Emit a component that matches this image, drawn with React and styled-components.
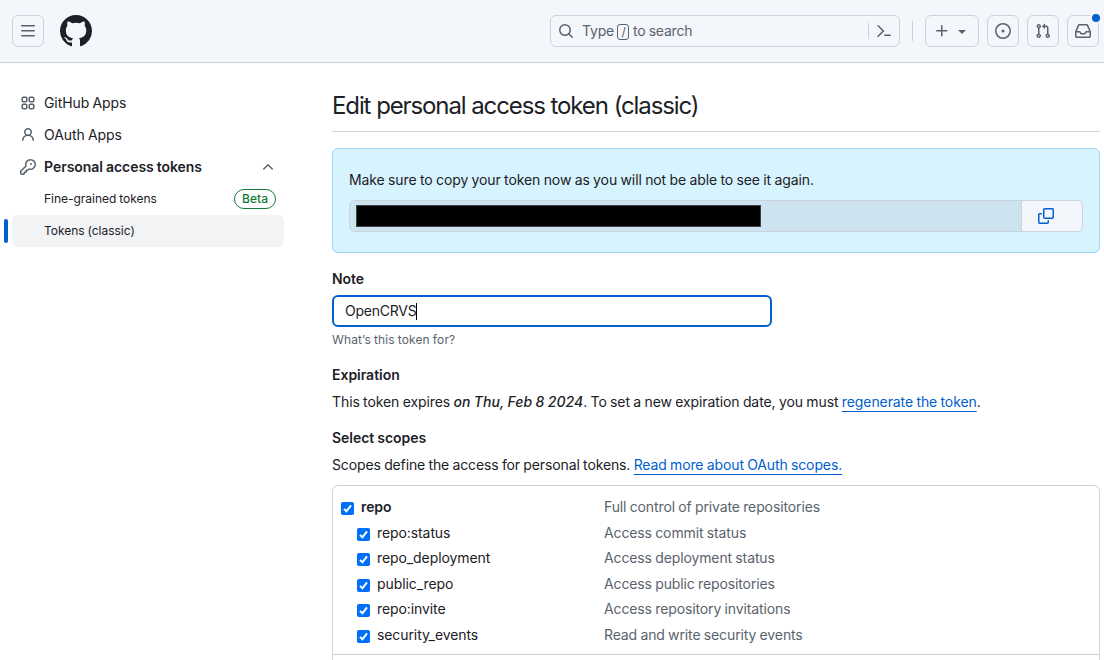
import React from "react";
import styled, { createGlobalStyle, css } from "styled-components";

const color = {
  text: "#1c2127",
  muted: "#5a636d",
  border: "#cbd3da",
  subtle: "#f3f6fa",
  blue: "#0060d0",
  green: "#127a37",
};

const GlobalStyle = createGlobalStyle`
  * { box-sizing: border-box; }
  html, body { margin: 0; padding: 0; height: 660px; overflow: hidden; background: #fff; }
  body {
    font-family: Inter, "Liberation Sans", sans-serif;
    font-size: 14px;
    line-height: 20px;
    letter-spacing: -0.09px;
    word-spacing: -0.47px;
    color: ${color.text};
  }
  h2, h3, p, ul { margin: 0; padding: 0; font-size: inherit; }
  ul { list-style: none; }
  button { font: inherit; color: inherit; padding: 0; }
`;

const paths = {
  bars: "M1 2.75A.75.75 0 0 1 1.75 2h12.5a.75.75 0 0 1 0 1.5H1.75A.75.75 0 0 1 1 2.75Zm0 5A.75.75 0 0 1 1.75 7h12.5a.75.75 0 0 1 0 1.5H1.75A.75.75 0 0 1 1 7.75ZM1.75 12h12.5a.75.75 0 0 1 0 1.5H1.75a.75.75 0 0 1 0-1.5Z",
  mark: "M8 0c4.42 0 8 3.58 8 8a8.013 8.013 0 0 1-5.45 7.59c-.4.08-.55-.17-.55-.38 0-.27.01-1.13.01-2.2 0-.75-.25-1.23-.54-1.48 1.78-.2 3.65-.88 3.65-3.95 0-.88-.31-1.59-.82-2.15.08-.2.36-1.02-.08-2.12 0 0-.67-.22-2.2.82-.64-.18-1.32-.27-2-.27-.68 0-1.36.09-2 .27-1.53-1.03-2.2-.82-2.2-.82-.44 1.1-.16 1.92-.08 2.12-.51.56-.82 1.28-.82 2.15 0 3.06 1.86 3.75 3.64 3.95-.23.2-.44.55-.51 1.07-.46.21-1.61.55-2.33-.66-.15-.24-.6-.83-1.23-.82-.67.01-.27.38.01.53.34.19.73.9.82 1.13.16.45.68 1.31 2.69.94 0 .67.01 1.3.01 1.49 0 .21-.15.45-.55.38A7.995 7.995 0 0 1 0 8c0-4.42 3.58-8 8-8Z",
  search: "M10.68 11.74a6 6 0 0 1-7.922-8.982 6 6 0 0 1 8.982 7.922l3.04 3.04a.749.749 0 0 1-.326 1.275.749.749 0 0 1-.734-.215ZM11.5 7a4.499 4.499 0 1 0-8.997 0A4.499 4.499 0 0 0 11.5 7Z",
  palette: "m6.354 8.04-4.773 4.773a.75.75 0 1 0 1.061 1.06L7.945 8.57a.75.75 0 0 0 0-1.06L2.642 2.206a.75.75 0 0 0-1.06 1.061L6.353 8.04ZM8.75 11.5a.75.75 0 0 0 0 1.5h5.5a.75.75 0 0 0 0-1.5h-5.5Z",
  plus: "M7.75 2a.75.75 0 0 1 .75.75V7h4.25a.75.75 0 0 1 0 1.5H8.5v4.25a.75.75 0 0 1-1.5 0V8.5H2.75a.75.75 0 0 1 0-1.5H7V2.75A.75.75 0 0 1 7.75 2Z",
  triangle: "m4.427 7.427 3.396 3.396a.25.25 0 0 0 .354 0l3.396-3.396A.25.25 0 0 0 11.396 7H4.604a.25.25 0 0 0-.177.427Z",
  issue: "M8 9.5a1.5 1.5 0 1 0 0-3 1.5 1.5 0 0 0 0 3ZM8 0a8 8 0 1 1 0 16A8 8 0 0 1 8 0ZM1.5 8a6.5 6.5 0 1 0 13 0 6.5 6.5 0 0 0-13 0Z",
  pull: "M1.5 3.25a2.25 2.25 0 1 1 3 2.122v5.256a2.251 2.251 0 1 1-1.5 0V5.372A2.25 2.25 0 0 1 1.5 3.25Zm5.677-.177L9.573.677A.25.25 0 0 1 10 .854V2.5h1A2.5 2.5 0 0 1 13.5 5v5.628a2.251 2.251 0 1 1-1.5 0V5a1 1 0 0 0-1-1h-1v1.646a.25.25 0 0 1-.427.177L7.177 3.427a.25.25 0 0 1 0-.354ZM3.75 2.5a.75.75 0 1 0 0 1.5.75.75 0 0 0 0-1.5Zm0 9.5a.75.75 0 1 0 0 1.5.75.75 0 0 0 0-1.5Zm8.25.75a.75.75 0 1 0 1.5 0 .75.75 0 0 0-1.5 0Z",
  inbox: "M2.8 2.06A1.75 1.75 0 0 1 4.41 1h7.18c.7 0 1.333.417 1.61 1.06l2.74 6.395c.04.093.06.194.06.295v4.5A1.75 1.75 0 0 1 14.25 15H1.75A1.75 1.75 0 0 1 0 13.25v-4.5c0-.101.02-.202.06-.295Zm1.61.44a.25.25 0 0 0-.23.152L1.887 8H4.75a.75.75 0 0 1 .6.3L6.625 10h2.75l1.275-1.7a.75.75 0 0 1 .6-.3h2.863L11.82 2.652a.25.25 0 0 0-.23-.152Zm10.09 7h-2.875l-1.275 1.7a.75.75 0 0 1-.6.3h-3.5a.75.75 0 0 1-.6-.3L4.375 9.5H1.5v3.75c0 .138.112.25.25.25h12.5a.25.25 0 0 0 .25-.25Z",
  apps: "M1.5 3.25c0-.966.784-1.75 1.75-1.75h2.5c.966 0 1.75.784 1.75 1.75v2.5A1.75 1.75 0 0 1 5.75 7.5h-2.5A1.75 1.75 0 0 1 1.5 5.75Zm7 0c0-.966.784-1.75 1.75-1.75h2.5c.966 0 1.75.784 1.75 1.75v2.5a1.75 1.75 0 0 1-1.75 1.75h-2.5A1.75 1.75 0 0 1 8.5 5.75Zm-7 7c0-.966.784-1.75 1.75-1.75h2.5c.966 0 1.75.784 1.75 1.75v2.5a1.75 1.75 0 0 1-1.75 1.75h-2.5a1.75 1.75 0 0 1-1.75-1.75Zm7 0c0-.966.784-1.75 1.75-1.75h2.5c.966 0 1.75.784 1.75 1.75v2.5a1.75 1.75 0 0 1-1.75 1.75h-2.5a1.75 1.75 0 0 1-1.75-1.75ZM3.25 3a.25.25 0 0 0-.25.25v2.5c0 .138.112.25.25.25h2.5A.25.25 0 0 0 6 5.75v-2.5A.25.25 0 0 0 5.75 3Zm7 0a.25.25 0 0 0-.25.25v2.5c0 .138.112.25.25.25h2.5a.25.25 0 0 0 .25-.25v-2.5a.25.25 0 0 0-.25-.25Zm-7 7a.25.25 0 0 0-.25.25v2.5c0 .138.112.25.25.25h2.5a.25.25 0 0 0 .25-.25v-2.5a.25.25 0 0 0-.25-.25Zm7 0a.25.25 0 0 0-.25.25v2.5c0 .138.112.25.25.25h2.5a.25.25 0 0 0 .25-.25v-2.5a.25.25 0 0 0-.25-.25Z",
  person: "M10.561 8.073a6.005 6.005 0 0 1 3.432 5.142.75.75 0 1 1-1.498.07 4.5 4.5 0 0 0-8.99 0 .75.75 0 0 1-1.498-.07 6.004 6.004 0 0 1 3.431-5.142 3.999 3.999 0 1 1 5.123 0ZM10.5 5a2.5 2.5 0 1 0-5 0 2.5 2.5 0 0 0 5 0Z",
  key: "M10.5 0a5.499 5.499 0 1 1-1.288 10.848l-.932.932a.749.749 0 0 1-.53.22H7v.75a.749.749 0 0 1-.22.53l-.5.5a.749.749 0 0 1-.53.22H5v.75a.749.749 0 0 1-.22.53l-.5.5a.749.749 0 0 1-.53.22h-2A1.75 1.75 0 0 1 0 14.25v-2c0-.199.079-.389.22-.53l4.932-4.932A5.5 5.5 0 0 1 10.5 0Zm-4 5.5c-.001.431.069.86.205 1.269a.75.75 0 0 1-.181.768L1.5 12.56v1.69c0 .138.112.25.25.25h1.69l.06-.06v-1.19a.75.75 0 0 1 .75-.75h1.19l.06-.06v-1.19a.75.75 0 0 1 .75-.75h1.19l1.023-1.025a.75.75 0 0 1 .768-.18A4 4 0 1 0 6.5 5.5ZM11 6a1 1 0 1 1 0-2 1 1 0 0 1 0 2Z",
  chevron: "M3.22 10.53a.749.749 0 0 1 0-1.06l4.25-4.25a.749.749 0 0 1 1.06 0l4.25 4.25a.749.749 0 1 1-1.06 1.06L8 6.811 4.28 10.53a.749.749 0 0 1-1.06 0Z",
  copy: "M0 6.75C0 5.784.784 5 1.75 5h1.5a.75.75 0 0 1 0 1.5h-1.5a.25.25 0 0 0-.25.25v7.5c0 .138.112.25.25.25h7.5a.25.25 0 0 0 .25-.25v-1.5a.75.75 0 0 1 1.5 0v1.5A1.75 1.75 0 0 1 9.25 16h-7.5A1.75 1.75 0 0 1 0 14.25ZM5 1.75C5 .784 5.784 0 6.75 0h7.5C15.216 0 16 .784 16 1.75v7.5A1.75 1.75 0 0 1 14.25 11h-7.5A1.75 1.75 0 0 1 5 9.25Zm1.75-.25a.25.25 0 0 0-.25.25v7.5c0 .138.112.25.25.25h7.5a.25.25 0 0 0 .25-.25v-7.5a.25.25 0 0 0-.25-.25Z",
};

const Svg = styled.svg`
  display: block;
  flex: none;
  fill: currentColor;
`;

const Icon = ({ name, size = 16 }) => (
  <Svg width={size} height={size} viewBox="0 0 16 16" aria-hidden="true">
    <path fillRule="evenodd" d={paths[name]} />
  </Svg>
);

const Header = styled.header`
  display: flex;
  align-items: center;
  justify-content: space-between;
  height: 63px;
  padding: 0 5px 0 12px;
  background: ${color.subtle};
  border-bottom: 1px solid ${color.border};
`;

const HeaderGroup = styled.div`
  display: flex;
  align-items: center;
  gap: ${(p) => p.$gap}px;
`;

const HeaderButton = styled.button`
  position: relative;
  display: flex;
  align-items: center;
  justify-content: center;
  gap: 4px;
  width: ${(p) => (p.$wide ? 54 : 32)}px;
  height: 32px;
  border: 1px solid ${color.border};
  border-radius: 6px;
  background: transparent;
  color: ${color.muted};
`;

const Logo = styled.a`
  color: ${color.text};
`;

const SearchBox = styled.div`
  display: flex;
  align-items: center;
  width: 350px;
  height: 32px;
  padding: 0 7px;
  border: 1px solid ${color.border};
  border-radius: 6px;
  color: ${color.muted};
`;

const SearchHint = styled.span`
  display: flex;
  align-items: center;
  flex: 1;
  gap: 3.5px;
  margin-left: 8px;
  letter-spacing: -0.2px;
`;

const SlashKey = styled.kbd`
  display: flex;
  align-items: center;
  justify-content: center;
  width: 12px;
  height: 16px;
  margin-top: 2px;
  border: 1px solid ${color.muted};
  border-radius: 3px;
  font: 12px/14px Inter, sans-serif;
`;

const Divider = styled.span`
  width: 1px;
  height: ${(p) => p.$height}px;
  margin-right: ${(p) => p.$after}px;
  background: ${color.border};
`;

const UnreadDot = styled.span`
  position: absolute;
  top: -4px;
  right: -4px;
  width: 12px;
  height: 12px;
  border: 2px solid ${color.subtle};
  border-radius: 50%;
  background: ${color.blue};
`;

const Layout = styled.div`
  display: flex;
  gap: 48px;
  height: 597px;
  overflow: hidden;
`;

const Sidebar = styled.nav`
  display: flex;
  flex-direction: column;
  flex: none;
  width: 284px;
  padding-top: 24px;
  padding-left: 4px;
`;

const NavRow = styled.a`
  display: flex;
  align-items: center;
  gap: 8px;
  height: 32px;
  margin-left: 8px;
  padding: 0 8px;
  ${(p) => p.$bold && css`
    font-weight: 600;
    letter-spacing: -0.04px;
  `}
`;

const SubRow = styled.a`
  display: flex;
  align-items: center;
  justify-content: space-between;
  flex: 1;
  height: 32px;
  padding: 0 8px 0 32px;
  border-radius: 6px;
  font-size: 12px;
  letter-spacing: -0.02px;
  background: ${(p) => (p.$current ? "#f2f3f5" : "transparent")};
`;

const SubItem = styled.div`
  display: flex;
  align-items: center;
  gap: 4px;
`;

const CurrentBar = styled.span`
  width: 4px;
  height: 24px;
  border-radius: 2px;
  background: ${(p) => (p.$current ? color.blue : "transparent")};
`;

const NavIcon = styled.span`
  color: ${color.muted};
`;

const NavLabel = styled.span`
  flex: 1;
`;

const BetaLabel = styled.span`
  padding: 0 7px;
  border: 1px solid ${color.green};
  border-radius: 10px;
  color: ${color.green};
  font-weight: 500;
  letter-spacing: 0;
  line-height: 18px;
`;

const Main = styled.main`
  width: 768px;
  flex: none;
  padding-top: 24px;
`;

const Title = styled.h2`
  height: 45px;
  border-bottom: 1px solid ${color.border};
  font-size: 24px;
  font-weight: 400;
  letter-spacing: -1.12px;
  word-spacing: 0.2px;
  line-height: 38px;
`;

const Flash = styled.section`
  height: 105px;
  margin-top: 16px;
  padding: 21px 16px 0;
  border: 1px solid #9fd4f9;
  border-radius: 6px;
  background: #d7f3fe;
`;

const TokenField = styled.div`
  display: flex;
  height: 32px;
  margin-top: 10px;
  border: 1px solid ${color.border};
  border-radius: 6px;
  background: #cde3ef;
  overflow: hidden;
`;

const TokenValue = styled.div`
  flex: 1;
  padding: 4px 6px;
`;

const Redaction = styled.div`
  width: 405px;
  height: 22px;
  border: 1px solid #3c4347;
  background: #000;
`;

const CopyButton = styled.button`
  width: 61px;
  padding-left: 16px;
  border: 0;
  border-left: 1px solid ${color.border};
  background: ${color.subtle};
  color: ${color.blue};
`;

const SectionLabel = styled.h3`
  margin-top: ${(p) => p.$top}px;
  font-weight: 600;
  letter-spacing: -0.03px;
`;

const NoteInput = styled.div`
  display: flex;
  align-items: center;
  width: 440px;
  height: 32px;
  margin-top: 6px;
  padding: 0 11px;
  border: 2px solid ${color.blue};
  border-radius: 6px;
  letter-spacing: -0.24px;
`;

const Caret = styled.span`
  width: 1px;
  height: 17px;
  background: #000;
`;

const Hint = styled.p`
  margin-top: 4px;
  color: ${color.muted};
  font-size: 12px;
  letter-spacing: 0.13px;
  line-height: 18px;
`;

const Paragraph = styled.p`
  margin-top: 7px;
  white-space: nowrap;
  letter-spacing: ${(p) => (p.$tight ? -0.12 : -0.09)}px;
`;

const ExpiryDate = styled.em`
  font-weight: 500;
  letter-spacing: 0.06px;
`;

const Link = styled.a`
  color: ${color.blue};
  text-decoration: underline;
  text-underline-offset: 4px;
  text-decoration-thickness: 1px;
  text-decoration-skip-ink: none;
`;

const ScopeBox = styled.div`
  height: 240px;
  margin-top: 10px;
  border: 1px solid ${color.border};
  border-radius: 6px;
`;

const ScopeGroup = styled.ul`
  height: 169px;
  padding-top: 8.35px;
  border-bottom: 1px solid ${color.border};
`;

const ScopeRow = styled.li`
  display: grid;
  grid-template-columns: 271px 1fr;
  align-items: center;
  height: 25.5px;
`;

const ScopeName = styled.label`
  display: flex;
  align-items: center;
  gap: 7px;
  padding-left: ${(p) => (p.$root ? 8 : 24)}px;
  font-weight: ${(p) => (p.$root ? 600 : 400)};
`;

const ScopeText = styled.span`
  color: ${color.muted};
  letter-spacing: -0.12px;
`;

const Box = styled.svg`
  display: block;
  margin-top: 3px;
`;

const Checkbox = () => (
  <Box width="13" height="13" viewBox="0 0 13 13">
    <rect width="13" height="13" rx="1.8" fill="#0070fb" />
    <path d="M3 6.9 5.4 9.3 10 3.3" fill="none" stroke="#fff" strokeWidth="2" />
  </Box>
);

const scopes = [
  ["repo", "Full control of private repositories"],
  ["repo:status", "Access commit status"],
  ["repo_deployment", "Access deployment status"],
  ["public_repo", "Access public repositories"],
  ["repo:invite", "Access repository invitations"],
  ["security_events", "Read and write security events"],
];

export default function App() {
  return (
    <>
      <GlobalStyle />
      <Header>
        <HeaderGroup $gap={16}>
          <HeaderButton><Icon name="bars" /></HeaderButton>
          <Logo><Icon name="mark" size={32} /></Logo>
        </HeaderGroup>
        <HeaderGroup $gap={12}>
          <SearchBox>
            <Icon name="search" />
            <SearchHint>
              <span>Type</span>
              <SlashKey>/</SlashKey>
              <span>to search</span>
            </SearchHint>
            <Divider $height={16} $after={7} />
            <Icon name="palette" />
          </SearchBox>
          <HeaderGroup $gap={8}>
            <Divider $height={20} $after={4} />
            <HeaderButton $wide><Icon name="plus" /><Icon name="triangle" /></HeaderButton>
            <HeaderButton><Icon name="issue" /></HeaderButton>
            <HeaderButton><Icon name="pull" /></HeaderButton>
            <HeaderButton><Icon name="inbox" /><UnreadDot /></HeaderButton>
          </HeaderGroup>
        </HeaderGroup>
      </Header>
      <Layout>
        <Sidebar>
          <NavRow><NavIcon><Icon name="apps" /></NavIcon><NavLabel>GitHub Apps</NavLabel></NavRow>
          <NavRow><NavIcon><Icon name="person" /></NavIcon><NavLabel>OAuth Apps</NavLabel></NavRow>
          <NavRow $bold>
            <NavIcon><Icon name="key" /></NavIcon>
            <NavLabel>Personal access tokens</NavLabel>
            <NavIcon><Icon name="chevron" /></NavIcon>
          </NavRow>
          <SubItem>
            <CurrentBar />
            <SubRow>Fine-grained tokens<BetaLabel>Beta</BetaLabel></SubRow>
          </SubItem>
          <SubItem>
            <CurrentBar $current />
            <SubRow $current>Tokens (classic)</SubRow>
          </SubItem>
        </Sidebar>
        <Main>
          <Title>Edit personal access token (classic)</Title>
          <Flash>
            <p>Make sure to copy your token now as you will not be able to see it again.</p>
            <TokenField>
              <TokenValue><Redaction /></TokenValue>
              <CopyButton><Icon name="copy" /></CopyButton>
            </TokenField>
          </Flash>
          <SectionLabel $top={16}>Note</SectionLabel>
          <NoteInput>OpenCRVS<Caret /></NoteInput>
          <Hint>What’s this token for?</Hint>
          <SectionLabel $top={16}>Expiration</SectionLabel>
          <Paragraph>
            This token expires <ExpiryDate>on Thu, Feb 8 2024</ExpiryDate>. To set a new expiration date, you must <Link>regenerate the token</Link>.
          </Paragraph>
          <SectionLabel $top={16}>Select scopes</SectionLabel>
          <Paragraph $tight>
            Scopes define the access for personal tokens. <Link>Read more about OAuth scopes.</Link>
          </Paragraph>
          <ScopeBox>
            <ScopeGroup>
              {scopes.map(([name, description], i) => (
                <ScopeRow key={name}>
                  <ScopeName $root={i === 0}><Checkbox />{name}</ScopeName>
                  <ScopeText>{description}</ScopeText>
                </ScopeRow>
              ))}
            </ScopeGroup>
          </ScopeBox>
        </Main>
      </Layout>
    </>
  );
}
